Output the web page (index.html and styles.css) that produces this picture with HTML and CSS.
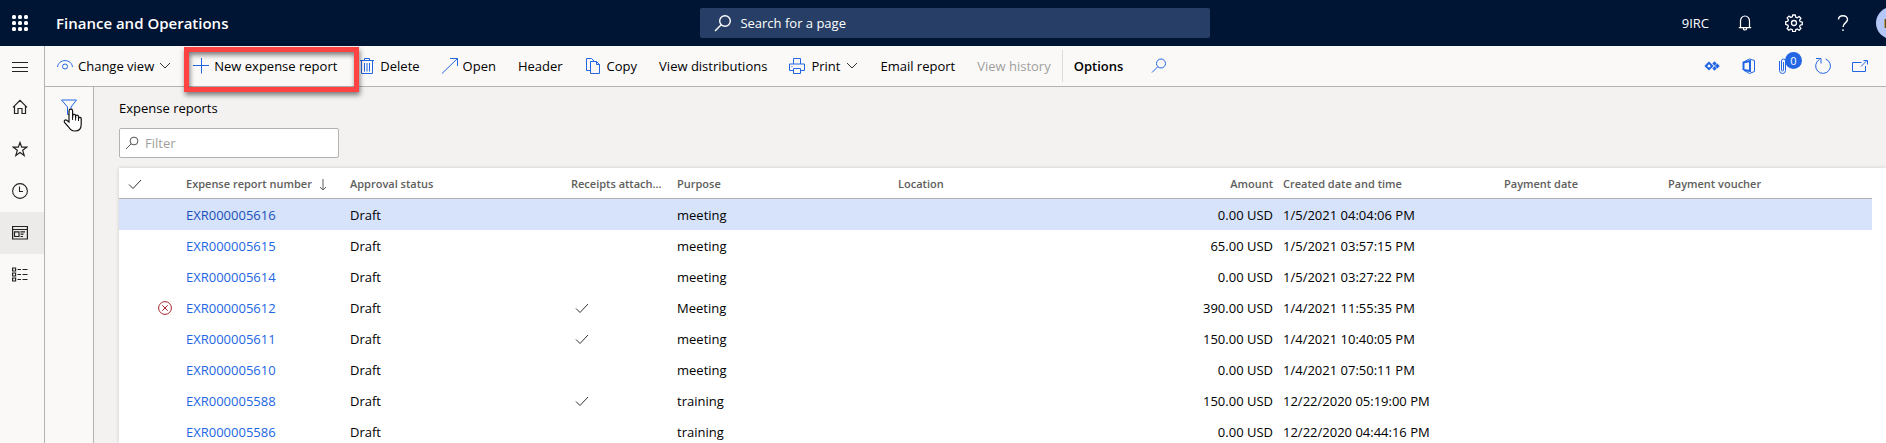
FILE: index.html
```html
<!DOCTYPE html>
<html lang="en">
<head>
<meta charset="utf-8">
<title>Finance and Operations</title>
<link rel="stylesheet" href="styles.css">
</head>
<body>
<header class="topbar">
  <button class="waffle" aria-label="App launcher">
    <svg class="icon16" viewBox="0 0 16 16" fill="#fff"><rect x="0" y="0" width="4" height="4" rx="1.500"/><rect x="6" y="0" width="4" height="4" rx="1.500"/><rect x="12" y="0" width="4" height="4" rx="1.500"/><rect x="0" y="6" width="4" height="4" rx="1.500"/><rect x="6" y="6" width="4" height="4" rx="1.500"/><rect x="12" y="6" width="4" height="4" rx="1.500"/><rect x="0" y="12" width="4" height="4" rx="1.500"/><rect x="6" y="12" width="4" height="4" rx="1.500"/><rect x="12" y="12" width="4" height="4" rx="1.500"/></svg>
  </button>
  <h1 class="brand">Finance and Operations</h1>
  <label class="search">
    <svg class="search-icon" viewBox="0 0 18 18" fill="none" stroke="#fff" stroke-width="1.4"><circle cx="11" cy="7" r="5.3"/><path d="M7.2 10.8L1 17"/></svg>
    <input type="text" class="search-input" placeholder="Search for a page" aria-label="Search for a page">
  </label>
  <div class="top-actions">
    <button class="company">9IRC</button>
    <button class="top-btn" aria-label="Notifications"><svg class="icon16" viewBox="0 0 16 16" fill="none" stroke="#fff" stroke-width="1.2"><path d="M3.5 12.5V6a4.5 5 0 0 1 9 0v6.500M1.800 12.600h12.400M6.300 13a1.700 2 0 0 0 3.400 0"/></svg></button>
    <button class="top-btn" aria-label="Settings"><svg class="icon18" viewBox="0 0 18 18" fill="none" stroke="#fff" stroke-width="1.3" stroke-linejoin="round"><path d="M7.700 1h2.600l.4 2.200 1.500.6 1.900-1.300 1.800 1.800-1.300 1.900.6 1.500 2.100.4v2.600l-2.100.4-.6 1.500 1.300 1.900-1.800 1.800-1.900-1.300-1.500.6-.4 2.100H7.700l-.4-2.100-1.500-.6-1.900 1.300-1.800-1.800 1.300-1.900-.6-1.500L.7 10.300V7.700l2.100-.4.6-1.500-1.300-1.900 1.800-1.800 1.900 1.300 1.500-.6z"/><circle cx="9" cy="9" r="2.500"/></svg></button>
    <button class="top-btn" aria-label="Help"><svg class="icon16" viewBox="0 0 16 16" fill="none" stroke="#fff" stroke-width="1.400"><path d="M3.500 4.500C3.500 2 5.300.7 8 .7s4.500 1.500 4.500 3.800c0 3.500-4.500 3.300-4.500 7.500M8 14.300v1.700"/></svg></button>
    <button class="avatar" aria-label="Account">KA</button>
  </div>
</header>
<div class="shell">
  <nav class="rail" aria-label="Main">
    <button class="rail-btn rail-toggle" aria-label="Expand navigation"><svg class="icon16" viewBox="0 0 16 16" stroke="#222" fill="none"><path d="M0 4.500h16M0 9.500h16M0 13.500h16"/></svg></button>
    <button class="rail-btn" aria-label="Home"><svg class="icon16" viewBox="0 0 16 16" stroke="#222" stroke-width="1.200" fill="none"><path d="M1 8.300L8 1.300l7 7M2.500 7v7.500h3.500V9.500h4v5h3.500V7"/></svg></button>
    <button class="rail-btn" aria-label="Favorites"><svg class="icon16" viewBox="0 0 16 16" stroke="#222" stroke-width="1.200" fill="none"><path d="M8 1.500l1.700 4.700h5l-4 3.100 1.500 5.200L8 11.400l-4.200 3.100 1.500-5.200-4-3.100h5z"/></svg></button>
    <button class="rail-btn" aria-label="Recent"><svg class="icon16" viewBox="0 0 16 16" stroke="#222" stroke-width="1.100" fill="none"><circle cx="8" cy="8" r="7.400"/><path d="M7.500 3.500v5h3.500"/></svg></button>
    <button class="rail-btn rail-current" aria-label="Workspaces"><svg class="icon16" viewBox="0 0 16 16" stroke="#222" stroke-width="1.200" fill="none"><path d="M.600 1.500h14.800v12.500H.600zM.600 4.500h14.800M2.500 6.800h4.500v4.700H2.500zM8.500 6.800h4.500M8.500 9.200h3M8.500 11.500h2.500"/></svg></button>
    <button class="rail-btn" aria-label="Modules"><svg class="icon16" viewBox="0 0 16 16" stroke="#222" stroke-width="1.200" fill="none"><path d="M.600 1h3v3h-3zM.600 6h3v3h-3zM.600 11h3v3h-3zM5.500 2.500H9M10.500 2.500H15.500M5.500 7.500H9M10.500 7.500H15.500M5.500 12.500H9M10.500 12.500H15.500"/></svg></button>
  </nav>
  <div class="work">
    <div class="toolbar" role="toolbar" aria-label="Actions">
      <button class="tool"><svg class="icon16" viewBox="0 0 16 16"><path d="M.5 9C1 5.200 4 2.600 8 2.600S15 5.200 15.500 9"/><circle cx="8" cy="8.500" r="2.500"/></svg>Change view<svg class="chevron" viewBox="0 0 12 16"><path d="M1 5l5 5 5-5"/></svg></button>
      <div class="marked">
        <button class="tool"><svg class="icon16" viewBox="0 0 16 16"><path d="M0 7.500h16M8.500 0v15.500"/></svg>New expense report</button>
        <span class="marker"></span>
      </div>
      <button class="tool"><svg class="icon16" viewBox="0 0 16 16"><path d="M1 2.500h14M5.500 2.500v-2h5v2M2.500 2.500v13h11v-13M5.500 5v8.500M8 5v8.500M10.500 5v8.500"/></svg>Delete</button>
      <button class="tool"><svg class="icon16" viewBox="0 0 16 16"><path d="M0 15.500L15.500.500M8 .500h7.500V8"/></svg>Open</button>
      <button class="tool">Header</button>
      <button class="tool tool-roomy"><svg class="icon16" viewBox="0 0 16 16"><path d="M5.500 12.500h-4V.500h5l3 3M5.500 3.500h6l3 3v9h-9zM11.500 3.500v3h3"/></svg>Copy</button>
      <button class="tool">View distributions</button>
      <button class="tool tool-roomy"><svg class="icon16" viewBox="0 0 16 16"><path d="M4.500 6V.500h7V6M4.500 12.500h-4V6h15v6.500h-4M4.500 10.500h7v5h-7zM2.500 8.500h1"/></svg>Print<svg class="chevron" viewBox="0 0 12 16"><path d="M1 5l5 5 5-5"/></svg></button>
      <button class="tool">Email report</button>
      <button class="tool" disabled>View history</button>
      <span class="divider"></span>
      <button class="tool tool-strong">Options</button>
      <button class="tool tool-find" aria-label="Search actions"><svg class="icon16" viewBox="0 0 16 16"><circle cx="10" cy="5.500" r="4.500"/><path d="M6.800 8.700L1 14.500"/></svg></button>
      <div class="tool-end">
        <button class="end-btn" aria-label="Power Apps"><svg class="icon16" viewBox="0 0 16 16"><path stroke-width="2" d="M5 4.800L1.800 8 5 11.200 8.200 8z"/><path class="solid" d="M10.500 3.300l2.200 2.200-2.200 2.200-2.200-2.200zM10.500 8.300l2.200 2.200-2.200 2.200-2.200-2.200zM13.300 5.600L15.700 8l-2.400 2.400L10.900 8z"/></svg></button>
        <button class="end-btn" aria-label="Open in Microsoft Office"><svg class="icon16" viewBox="0 0 16 16"><path d="M2.500 12V4l6-3 5 1.500v11l-5 2z"/><path stroke-width="2" d="M2.500 12V4.500L9 3v10l-6-1"/></svg></button>
        <button class="end-btn" aria-label="Attachments"><svg class="icon16" viewBox="0 0 16 16"><path d="M1.500 3v9.500a3 3 0 0 0 6 0V3a2 2 0 0 0-4 0v9a1 1 0 0 0 2 0V4"/></svg><span class="badge">0</span></button>
        <button class="end-btn" aria-label="Refresh"><svg class="icon16" viewBox="0 0 16 16"><path d="M10.500 1A7.400 7.400 0 1 1 4.500 1.500M1 .500h5v5"/></svg></button>
        <button class="end-btn" aria-label="Open in new window"><svg class="icon16" viewBox="0 0 16 16"><path d="M9.500 4.500H.500v9h13V8M9 8.500l6-6M11.500 2.500h4v4"/></svg></button>
      </div>
    </div>
    <div class="body">
      <aside class="filters">
        <button class="filter-btn" aria-label="Show filters"><svg class="icon16" viewBox="0 0 16 16"><path d="M.500 1h15L10 8v7.500H6.500V8z"/></svg>
          <svg class="pointer" viewBox="0 0 20 24"><path d="M6 14V3a1.800 1.800 0 0 1 3.600 0v5l0 1.500V7.500a1.600 1.600 0 0 1 3 0V10 8.200a1.500 1.500 0 0 1 2.900 0V10.500a1.400 1.400 0 0 1 2.700 0v6c0 4-2.500 6.500-6.200 6.500-3.500 0-5-1.500-6.500-4.200L1.500 14.500c-1-2 1-3.300 2.500-2z" fill="#fff" stroke="#111" stroke-width="1.200"/><path d="M9.600 8v4M12.600 9v3.500M15.500 10v3" stroke="#111" fill="none"/></svg>
        </button>
      </aside>
      <main class="content">
        <h2 class="title">Expense reports</h2>
        <label class="quick">
          <svg class="quick-icon" viewBox="0 0 14 14" fill="none" stroke="#555"><circle cx="9" cy="5" r="3.900"/><path d="M6.200 7.800L1 13"/></svg>
          <input type="text" class="quick-input" placeholder="Filter" aria-label="Filter">
        </label>
        <div class="grid-wrap">
          <table class="grid">
            <colgroup><col class="w-check"><col class="w-flag"><col class="w-mid"><col class="w-wide"><col class="w-receipt"><col class="w-wide"><col class="w-wide"><col class="w-mid"><col class="w-wide"><col class="w-mid"><col></colgroup>
            <thead>
              <tr><th class="pick"><svg class="tick" viewBox="0 0 14 12"><path d="M1 6.500l4 4 8-8.500"/></svg></th><th></th><th class="sorted">Expense report number<svg class="sort" viewBox="0 0 8 12"><path d="M4 0v11M1 8l3 3 3-3"/></svg></th><th>Approval status</th><th>Receipts attach...</th><th>Purpose</th><th>Location</th><th class="num">Amount</th><th>Created date and time</th><th>Payment date</th><th>Payment voucher</th></tr>
            </thead>
            <tbody>
              <tr class="selected"><td></td><td></td><td><a href="#">EXR000005616</a></td><td>Draft</td><td></td><td>meeting</td><td></td><td class="num">0.00 USD</td><td>1/5/2021 04:04:06 PM</td><td></td><td></td></tr>
              <tr><td></td><td></td><td><a href="#">EXR000005615</a></td><td>Draft</td><td></td><td>meeting</td><td></td><td class="num">65.00 USD</td><td>1/5/2021 03:57:15 PM</td><td></td><td></td></tr>
              <tr><td></td><td></td><td><a href="#">EXR000005614</a></td><td>Draft</td><td></td><td>meeting</td><td></td><td class="num">0.00 USD</td><td>1/5/2021 03:27:22 PM</td><td></td><td></td></tr>
              <tr><td></td><td class="flag"><svg class="error" viewBox="0 0 14 14"><circle cx="7" cy="7" r="6.400"/><path d="M4.300 4.300l5.400 5.400M9.700 4.300L4.300 9.700"/></svg></td><td><a href="#">EXR000005612</a></td><td>Draft</td><td class="got"><svg class="tick" viewBox="0 0 14 12"><path d="M1 6.500l4 4 8-8.500"/></svg></td><td>Meeting</td><td></td><td class="num">390.00 USD</td><td>1/4/2021 11:55:35 PM</td><td></td><td></td></tr>
              <tr><td></td><td></td><td><a href="#">EXR000005611</a></td><td>Draft</td><td class="got"><svg class="tick" viewBox="0 0 14 12"><path d="M1 6.500l4 4 8-8.500"/></svg></td><td>meeting</td><td></td><td class="num">150.00 USD</td><td>1/4/2021 10:40:05 PM</td><td></td><td></td></tr>
              <tr><td></td><td></td><td><a href="#">EXR000005610</a></td><td>Draft</td><td></td><td>meeting</td><td></td><td class="num">0.00 USD</td><td>1/4/2021 07:50:11 PM</td><td></td><td></td></tr>
              <tr><td></td><td></td><td><a href="#">EXR000005588</a></td><td>Draft</td><td class="got"><svg class="tick" viewBox="0 0 14 12"><path d="M1 6.500l4 4 8-8.500"/></svg></td><td>training</td><td></td><td class="num">150.00 USD</td><td>12/22/2020 05:19:00 PM</td><td></td><td></td></tr>
              <tr><td></td><td></td><td><a href="#">EXR000005586</a></td><td>Draft</td><td></td><td>training</td><td></td><td class="num">0.00 USD</td><td>12/22/2020 04:44:16 PM</td><td></td><td></td></tr>
            </tbody>
          </table>
        </div>
      </main>
    </div>
  </div>
</div>
</body>
</html>
```
FILE: styles.css
```css
* { box-sizing: border-box; }
html, body { height: 100%; }
body {
  margin: 0;
  display: flex;
  flex-direction: column;
  overflow: hidden;
  font-family: "Open Sans", "Noto Sans", sans-serif;
  font-size: 13px;
  line-height: 20px;
  color: #000;
  background: #f3f2f1;
}
button, input { font: inherit; color: inherit; }
button { border: 0; padding: 0; background: none; }
svg { display: block; flex: none; }
.icon16 { width: 16px; height: 16px; }
.icon18 { width: 18px; height: 18px; }

.topbar {
  flex: none;
  height: 46px;
  display: grid;
  grid-template-columns: 44px 1fr 27% 1fr 20px;
  align-items: center;
  color: #fff;
  background: #001433;
}
.waffle { padding-left: 12px; }
.brand { margin: 0 0 0 12px; font-size: 15px; font-weight: 600; }
.search {
  display: flex;
  align-items: center;
  height: 30px;
  padding-left: 14px;
  gap: 8px;
  border-radius: 2px;
  background: #273f66;
}
.search-icon { width: 18px; height: 18px; }
.search-input { flex: 1; border: 0; padding: 0; background: none; outline: 0; }
.search-input::placeholder { color: #fff; opacity: 1; }
.top-actions { grid-column: 4 / 6; display: flex; justify-content: flex-end; align-items: center; margin-right: -22px; }
.company { padding: 0 11px; }
.top-btn { width: 49px; height: 46px; display: grid; place-items: center; }
.avatar {
  flex: none;
  width: 32px;
  height: 32px;
  margin-left: 9px;
  border-radius: 50%;
  color: #5c4a12;
  background: #b5c7f7;
  font-weight: 600;
}

.shell { flex: 1; display: flex; min-height: 0; }
.rail { flex: none; width: 45px; border-right: 1px solid #b5b3b1; background: #faf9f8; }
.rail-btn { display: flex; align-items: center; width: 100%; height: 42px; padding-left: 12px; }
.rail-toggle { height: 40px; }
.rail-current { background: #edebe9; }
.work { flex: 1; min-width: 0; display: flex; flex-direction: column; }

.toolbar {
  flex: none;
  display: flex;
  align-items: center;
  height: 41px;
  padding-left: 1px;
  border-bottom: 1px solid #b5b3b1;
  background: #faf9f8;
}
.tool { display: flex; align-items: center; gap: 5px; height: 40px; padding: 0 11px; white-space: nowrap; }
.tool-roomy { gap: 6px; }
.tool svg, .end-btn svg, .filter-btn .icon16 { fill: none; stroke: #2266e3; }
.tool .chevron { width: 12px; height: 16px; stroke: #333; }
.tool:disabled { color: #a19f9d; }
.tool-strong { font-weight: 600; }
.tool-find { margin-left: 6px; }
.divider { width: 1px; height: 32px; background: #dddbd9; }
.marked { position: relative; }
.marker {
  position: absolute;
  inset: 1px -11px -6px 2px;
  border: 5px solid #ff4343;
  box-shadow: 1px 3px 5px rgba(0, 0, 0, .5), inset 1px 3px 5px rgba(0, 0, 0, .5);
  z-index: 1;
}
.tool-end { display: flex; margin-left: auto; padding-right: 8px; }
.end-btn { position: relative; width: 37px; height: 40px; display: grid; place-items: center; }
.end-btn .solid { fill: #2266e3; stroke: none; }
.badge {
  position: absolute;
  top: 6px;
  right: 2px;
  width: 17px;
  height: 17px;
  border-radius: 50%;
  color: #fff;
  background: #2266e3;
  font-size: 11px;
  line-height: 17px;
}

.body { flex: 1; display: flex; min-height: 0; }
.filters { flex: none; width: 49px; border-right: 1px solid #b5b3b1; background: #faf9f8; }
.filter-btn { position: relative; padding: 12px 16px; }
.pointer { position: absolute; left: 18px; top: 21px; width: 20px; height: 24px; }
.content { flex: 1; min-width: 0; display: flex; flex-direction: column; padding: 11px 0 0 25px; }
.title { margin: 0; font-size: 13px; font-weight: 400; }
.quick {
  flex: none;
  display: flex;
  align-items: center;
  gap: 6px;
  width: 220px;
  height: 30px;
  margin: 10px 0;
  padding-left: 5px;
  border: 1px solid #b5b3b1;
  border-radius: 2px;
  background: #fff;
}
.quick-icon { width: 14px; height: 14px; }
.quick-input { flex: 1; min-width: 0; border: 0; padding: 0; outline: 0; background: none; }
.quick-input::placeholder { color: #a19f9d; opacity: 1; }

.grid-wrap { flex: 1; min-height: 0; overflow: hidden; padding-right: 14px; background: #fff; box-shadow: 0 0 4px rgba(0, 0, 0, .16); }
.grid { width: 100%; table-layout: fixed; border-collapse: separate; border-spacing: 0; }
.w-check { width: 30px; }
.w-flag { width: 32px; }
.w-mid { width: 164px; }
.w-wide { width: 221px; }
.w-receipt { width: 106px; }
.grid th, .grid td { height: 31px; padding: 0 5px; text-align: left; white-space: nowrap; }
.grid th {
  padding-top: 2px;
  color: #605e5c;
  font-size: 11px;
  font-weight: 600;
  border-bottom: 1px solid #b5b3b1;
}
.grid .num { text-align: right; }
.grid a { color: #2266e3; text-decoration: none; }
.selected td { background: #d7e3fb; }
.selected a { color: #1b50b8; }
.tick { width: 14px; height: 12px; fill: none; stroke: #333; }
.grid .pick, .grid .got { padding-left: 9px; }
.sort { display: inline-block; width: 8px; height: 12px; margin-left: 7px; fill: none; stroke: #605e5c; vertical-align: middle; }
.error { width: 14px; height: 14px; fill: none; stroke: #a4262c; }
.grid .flag { padding-left: 9px; }
```
